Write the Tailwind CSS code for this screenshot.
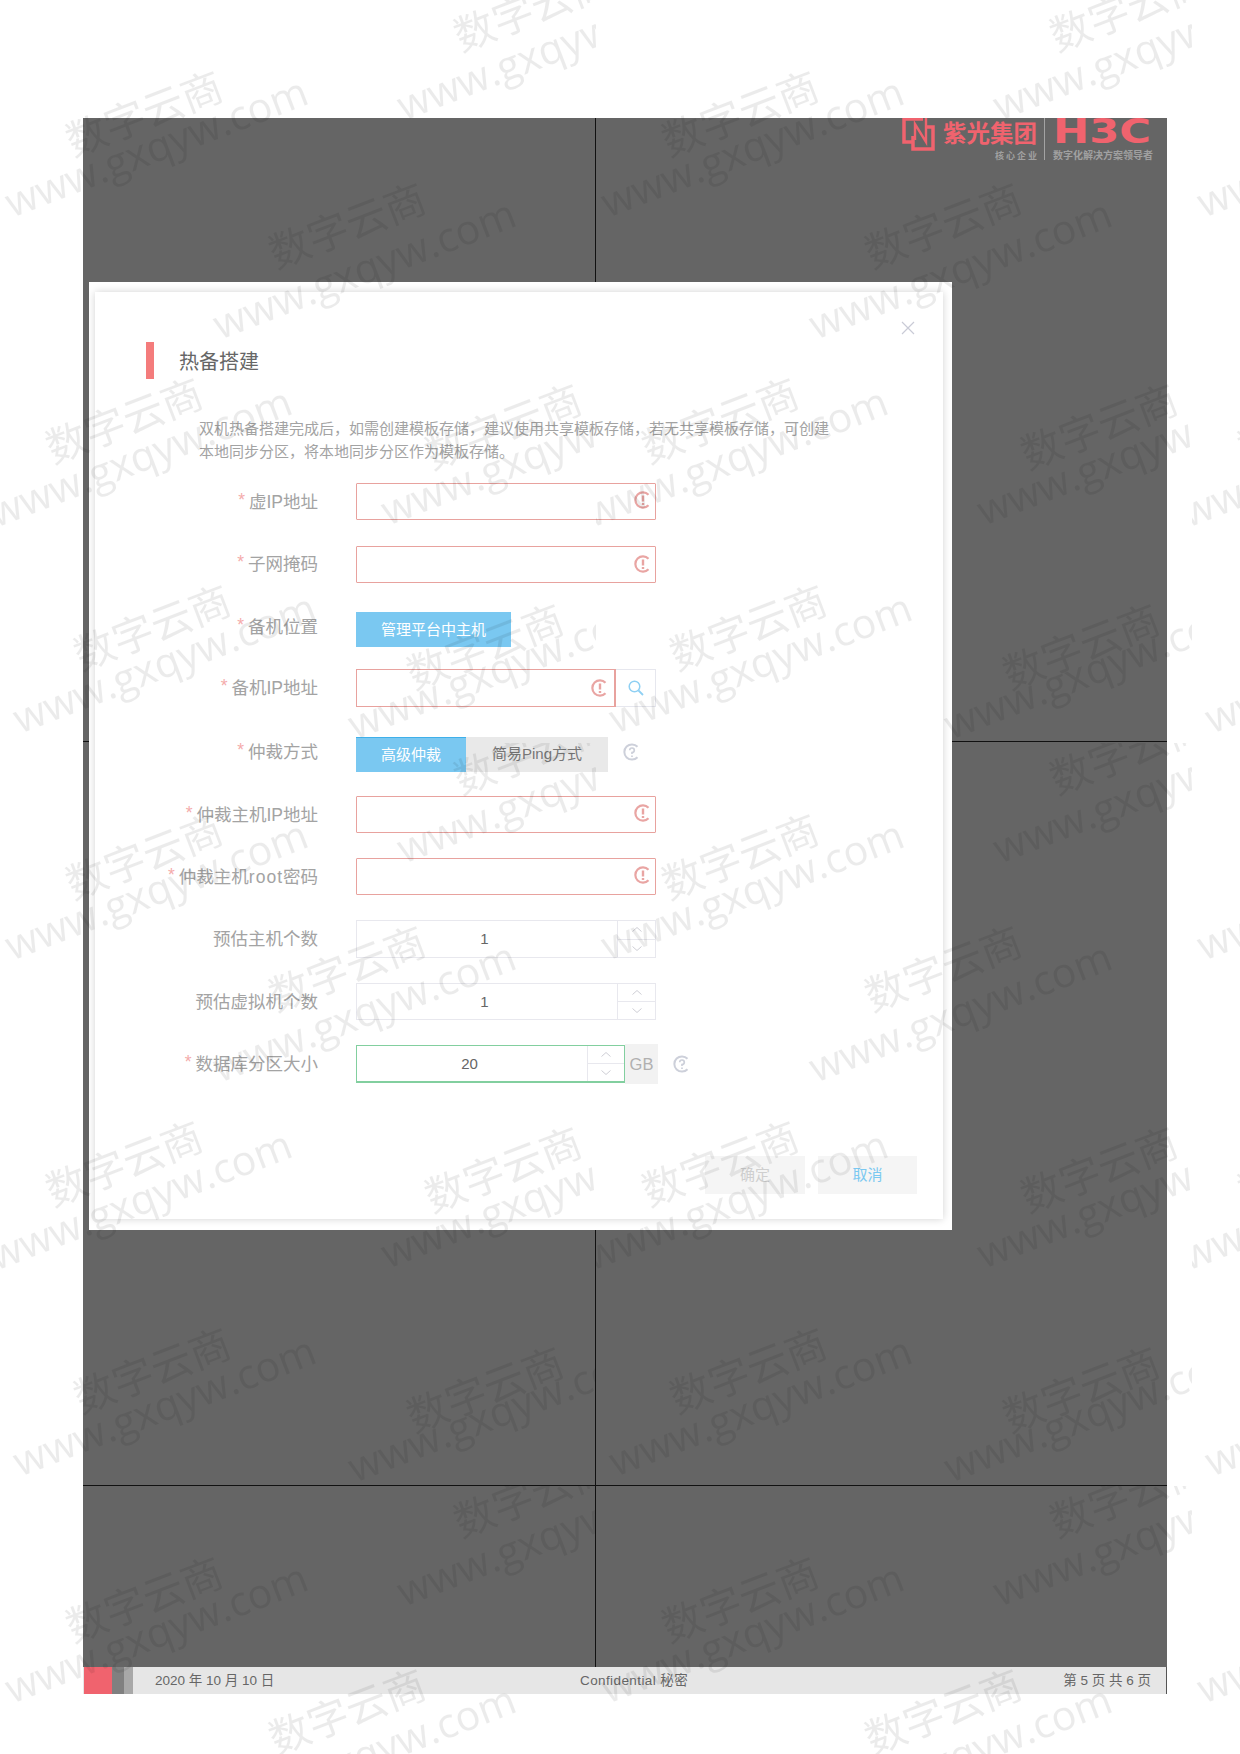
<!DOCTYPE html>
<html lang="zh-CN">
<head>
  <meta charset="UTF-8" />
  <title>热备搭建</title>
  <script src="https://cdn.jsdelivr.net/npm/@tailwindcss/browser@4"></script>
</head>
<body class="bg-white font-['Liberation_Sans','Noto_Sans_CJK_SC',sans-serif]">

<svg width="0" height="0" class="absolute">
  <symbol id="err" viewBox="0 0 18 18">
    <path d="M14.5 3.8A7.6 7.6 0 1 0 14.5 14.2" fill="none" stroke="#e9a5a3" stroke-width="2.2"/>
    <path d="M9 4.5v6M9 12v2" stroke="#e9a5a3" stroke-width="2.4" fill="none"/>
  </symbol>
  <symbol id="help" viewBox="0 0 18 18">
    <path d="M14.5 3.8A7.6 7.6 0 1 0 14.5 14.2" fill="none" stroke="#cdd0da" stroke-width="2"/>
    <path d="M6.7 7.2A2.3 2.3 0 1 1 9 9.6V11M9 12.4v1.5" stroke="#cdd0da" stroke-width="1.7" fill="none"/>
  </symbol>
  <symbol id="up" viewBox="0 0 12 7"><path d="M1.5 5.5L6 1.5l4.5 4" fill="none" stroke="#cfcfd6" stroke-width="1"/></symbol>
  <symbol id="down" viewBox="0 0 12 7"><path d="M1.5 1.5L6 5.5l4.5-4" fill="none" stroke="#cfcfd6" stroke-width="1"/></symbol>
</svg>

<div class="relative w-[1240px] h-[1754px] overflow-hidden pt-[118px] pl-[83px]">

  <!-- dimmed page -->
  <div class="relative w-[1084px] h-[1549px] bg-[#656565]">
    <div class="absolute left-[512px] top-0 bottom-0 w-px bg-[#111]"></div>
    <div class="absolute left-0 right-0 top-[623px] h-px bg-[#111]"></div>
    <div class="absolute left-0 right-0 top-[1367px] h-px bg-[#111]"></div>

    <!-- logo -->
    <div class="relative flex justify-end items-start pr-[16px] h-[50px]">
      <div class="relative w-[134px] h-[42px]">
        <svg class="absolute left-0 top-0" width="33" height="33" viewBox="0 0 33 33">
          <path d="M2 0V24H10M2 1H21" fill="none" stroke="#f0636e" stroke-width="3.5"/>
          <path d="M11 18V31H31V9H24" fill="none" stroke="#f0636e" stroke-width="3.5"/>
          <path d="M13 22V6L24 24V0" fill="none" stroke="#f0636e" stroke-width="2.4"/>
        </svg>
        <span class="absolute left-[41px] top-[2px] text-[23.5px] leading-[28px] font-bold text-[#f0636e] whitespace-nowrap">紫光集团</span>
        <span class="absolute right-[-3px] top-[33px] text-[9px] leading-[10px] font-bold tracking-[2px] text-[#a0a0a0] whitespace-nowrap">核心企业</span>
      </div>
      <div class="w-px h-[42px] bg-[#a3a3a3] mx-[8px]"></div>
      <div class="relative w-[98px] h-[42px]">
        <svg class="absolute left-0 top-0" width="98" height="26" viewBox="0 0 98 26">
          <text x="0" y="25" font-size="34" font-weight="700" font-family="DejaVu Sans" fill="#f0636e" textLength="98" lengthAdjust="spacingAndGlyphs">H3C</text>
        </svg>
        <span class="absolute left-0 top-[33px] text-[10px] leading-[10px] font-bold text-[#a0a0a0] whitespace-nowrap">数字化解决方案领导者</span>
      </div>
    </div>

    <!-- dialog -->
    <div class="absolute left-[6px] top-[164px] w-[863px] h-[948px] bg-white pl-[6px] pt-[10px]">
      <div class="relative w-[848px] h-[927px] bg-white shadow-[0_0_8px_rgba(0,0,0,0.18)] pt-[50px] pl-[51px]">
        <svg class="absolute left-[806px] top-[29px]" width="14" height="14" viewBox="0 0 14 14">
          <path d="M1 1l12 12M13 1L1 13" stroke="#c9cbd6" stroke-width="1.2"/>
        </svg>

        <div class="flex items-center h-[37px] gap-[26px]">
          <div class="w-2 h-full bg-[#f47c7c]"></div>
          <h2 class="text-[20px] leading-[37px] pt-[3px] -ml-px text-[#666]">热备搭建</h2>
        </div>

        <p class="mt-[38px] ml-[53px] text-[15px] leading-[23px] text-[#a3a3a3] whitespace-nowrap">双机热备搭建完成后，如需创建模板存储，建议使用共享模板存储，若无共享模板存储，可创建<br>本地同步分区，将本地同步分区作为模板存储。</p>

        <!-- form -->
        <div class="mt-[20px] text-[17.5px] text-[#a3a3a3]">
          <div class="flex items-center h-[37px]">
            <label class="w-[172px] mr-[38px] pt-[2px] flex justify-end gap-[4px] whitespace-nowrap"><span class="text-[#f4abab] -mt-[2px]">*</span>虚IP地址</label>
            <div class="relative w-[300px] h-full border border-[#e8a29e] rounded-[1px]">
              <svg class="absolute right-[3px] top-[7px] w-[18px] h-[18px]"><use href="#err"/></svg>
            </div>
          </div>

          <div class="flex items-center h-[37px] mt-[26px]">
            <label class="w-[172px] mr-[38px] flex justify-end gap-[4px] whitespace-nowrap"><span class="text-[#f4abab] -mt-[2px]">*</span>子网掩码</label>
            <div class="relative w-[300px] h-full border border-[#e8a29e] rounded-[1px]">
              <svg class="absolute right-[3px] top-[8px] w-[18px] h-[18px]"><use href="#err"/></svg>
            </div>
          </div>

          <div class="flex items-center h-[35px] mt-[29px]">
            <label class="w-[172px] mr-[38px] pb-[4px] flex justify-end gap-[4px] whitespace-nowrap"><span class="text-[#f4abab] -mt-[2px]">*</span>备机位置</label>
            <button class="w-[155px] h-full pt-px bg-[#7ac8f1] text-white text-[15px]">管理平台中主机</button>
          </div>

          <div class="flex items-center h-[38px] mt-[22px]">
            <label class="w-[172px] mr-[38px] flex justify-end gap-[4px] whitespace-nowrap"><span class="text-[#f4abab] -mt-[2px]">*</span>备机IP地址</label>
            <div class="relative w-[260px] h-full border border-r-2 border-[#e8a29e]">
              <svg class="absolute right-[5px] top-[9px] w-[18px] h-[18px]"><use href="#err"/></svg>
            </div>
            <div class="w-[40px] h-full flex items-center justify-center border border-l-0 border-[#e6e7ee]">
              <svg width="18" height="18" viewBox="0 0 18 18"><circle cx="7.5" cy="7.5" r="5.3" fill="none" stroke="#8fd0f3" stroke-width="1.5"/><path d="M11.5 11.5l4.5 4.5" stroke="#8fd0f3" stroke-width="1.8"/></svg>
            </div>
          </div>

          <div class="flex items-center h-[35px] mt-[30px]">
            <label class="w-[172px] mr-[38px] pb-[5px] flex justify-end gap-[4px] whitespace-nowrap"><span class="text-[#f4abab] -mt-[2px]">*</span>仲裁方式</label>
            <div class="flex h-full text-[15px]">
              <div class="w-[110px] bg-[#7ac8f1] border-t border-[#3fb0ea] text-white flex items-center justify-center">高级仲裁</div>
              <div class="w-[142px] bg-[#e9e9e9] text-[#777] flex items-center justify-center">简易Ping方式</div>
            </div>
            <svg class="ml-[15px] mb-[5px] w-[18px] h-[18px]"><use href="#help"/></svg>
          </div>

          <div class="flex items-center h-[37px] mt-[24px]">
            <label class="w-[172px] mr-[38px] pt-px flex justify-end gap-[4px] whitespace-nowrap"><span class="text-[#f4abab] -mt-[2px]">*</span>仲裁主机IP地址</label>
            <div class="relative w-[300px] h-full border border-[#e8a29e] rounded-[1px]">
              <svg class="absolute right-[3px] top-[7px] w-[18px] h-[18px]"><use href="#err"/></svg>
            </div>
          </div>

          <div class="flex items-center h-[37px] mt-[25px]">
            <label class="w-[172px] mr-[38px] pt-px flex justify-end gap-[4px] whitespace-nowrap"><span class="text-[#f4abab] -mt-[2px]">*</span><span>仲裁主机<span class="tracking-[1px]">root</span>密码</span></label>
            <div class="relative w-[300px] h-full border border-[#e8a29e] rounded-[1px]">
              <svg class="absolute right-[3px] top-[7px] w-[18px] h-[18px]"><use href="#err"/></svg>
            </div>
          </div>

          <div class="flex items-center h-[38px] mt-[25px]">
            <label class="w-[172px] mr-[38px] pt-px text-right whitespace-nowrap">预估主机个数</label>
            <div class="flex w-[300px] h-full border border-[#e8e8ee]">
              <div class="flex-1 flex items-center justify-center pr-[5px] pt-px text-[15px] text-[#666]">1</div>
              <div class="w-[38px] flex flex-col border-l border-[#e8e8ee]">
                <div class="flex-1 flex items-center justify-center border-b border-[#e8e8ee]"><svg width="12" height="7"><use href="#up"/></svg></div>
                <div class="flex-1 flex items-center justify-center"><svg width="12" height="7"><use href="#down"/></svg></div>
              </div>
            </div>
          </div>

          <div class="flex items-center h-[37px] mt-[25px]">
            <label class="w-[172px] mr-[38px] pt-px text-right whitespace-nowrap">预估虚拟机个数</label>
            <div class="flex w-[300px] h-full border border-[#e8e8ee]">
              <div class="flex-1 flex items-center justify-center pr-[5px] pt-px text-[15px] text-[#666]">1</div>
              <div class="w-[38px] flex flex-col border-l border-[#e8e8ee]">
                <div class="flex-1 flex items-center justify-center border-b border-[#e8e8ee]"><svg width="12" height="7"><use href="#up"/></svg></div>
                <div class="flex-1 flex items-center justify-center"><svg width="12" height="7"><use href="#down"/></svg></div>
              </div>
            </div>
          </div>

          <div class="flex items-center h-[38px] mt-[25px]">
            <label class="w-[172px] mr-[38px] pt-px flex justify-end gap-[4px] whitespace-nowrap"><span class="text-[#f4abab] -mt-[2px]">*</span>数据库分区大小</label>
            <div class="flex w-[269px] h-full border border-b-2 border-[#82cf9f]">
              <div class="flex-1 flex items-center justify-center pr-[5px] pt-px text-[15px] text-[#666]">20</div>
              <div class="w-[37px] flex flex-col border-l border-[#e8e8ee]">
                <div class="flex-1 flex items-center justify-center border-b border-[#e8e8ee]"><svg width="12" height="7"><use href="#up"/></svg></div>
                <div class="flex-1 flex items-center justify-center"><svg width="12" height="7"><use href="#down"/></svg></div>
              </div>
            </div>
            <div class="w-[33px] h-[40px] bg-[#f2f2f2] flex items-center justify-center text-[#b0b0b0] text-[16.5px]">GB</div>
            <svg class="ml-[15px] w-[18px] h-[18px]"><use href="#help"/></svg>
          </div>
        </div>

        <div class="flex mt-[73px] ml-[559px] gap-[13px] text-[15px]">
          <button class="w-[100px] h-[38px] pt-px bg-[#f5f5f5] text-[#cfcfcf]">确定</button>
          <button class="w-[99px] h-[38px] pt-px bg-[#f5f5f5] text-[#7ac8f1]">取消</button>
        </div>
      </div>
    </div>
  </div>

  <!-- page footer -->
  <div class="relative flex items-center w-[1084px] h-[27px] pt-[2px] bg-[#e6e6e6] border-r border-[#555] text-[13.5px] text-[#666]">
    <div class="absolute left-px top-0 bottom-0 w-[28px] bg-[#f0636e]"></div>
    <div class="absolute left-[29px] top-0 bottom-0 w-[12px] bg-[#808080]"></div>
    <div class="absolute left-[41px] top-0 bottom-0 w-[9px] bg-[#a8a8a8]"></div>
    <span class="ml-[72px] w-[425px]">2020 年 10 月 10 日</span>
    <span class="tracking-[0.4px]">Confidential 秘密</span>
    <span class="ml-auto mr-[15px]">第 5 页 共 6 页</span>
  </div>

  <!-- watermark, one tile per logical page section -->
  <svg class="absolute left-0 top-0 pointer-events-none" width="1240" height="1754">
    <defs>
      <pattern id="wm" width="596" height="743" patternUnits="userSpaceOnUse">
        <g fill="#000" fill-opacity="0.08">
          <g font-family="Noto Sans CJK SC" font-size="41">
            <text transform="translate(461 52) rotate(-21)">数字云商</text>
            <text transform="translate(73 157) rotate(-21)">数字云商</text>
            <text transform="translate(276 269) rotate(-21)">数字云商</text>
            <text transform="translate(53 464) rotate(-21)">数字云商</text>
            <text transform="translate(432 470) rotate(-21)">数字云商</text>
            <text transform="translate(81 671) rotate(-21)">数字云商</text>
            <text transform="translate(414 690) rotate(-21)">数字云商</text>
          </g>
          <g font-family="Open Sans" font-size="41">
            <text transform="translate(404 121) rotate(-21)">www.gxqyw.com</text>
            <text transform="translate(12 218) rotate(-21)">www.gxqyw.com</text>
            <text transform="translate(220 340) rotate(-21)">www.gxqyw.com</text>
            <text transform="translate(-4 528) rotate(-21)">www.gxqyw.com</text>
            <text transform="translate(388 526) rotate(-21)">www.gxqyw.com</text>
            <text transform="translate(20 734) rotate(-21)">www.gxqyw.com</text>
            <text transform="translate(355 740) rotate(-21)">www.gxqyw.com</text>
          </g>
        </g>
      </pattern>
    </defs>
    <rect width="1240" height="1754" fill="url(#wm)"/>
  </svg>
</div>
</body>
</html>
